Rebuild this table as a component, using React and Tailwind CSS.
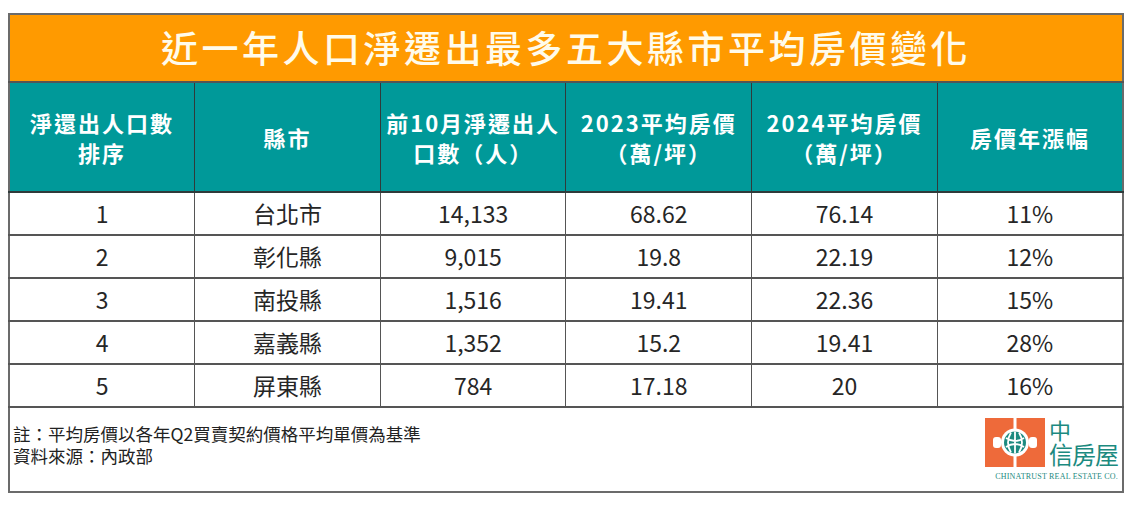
const rows = [
  ['1', '台北市', '14,133', '68.62', '76.14', '11%'],
  ['2', '彰化縣', '9,015', '19.8', '22.19', '12%'],
  ['3', '南投縣', '1,516', '19.41', '22.36', '15%'],
  ['4', '嘉義縣', '1,352', '15.2', '19.41', '28%'],
  ['5', '屏東縣', '784', '17.18', '20', '16%'],
]

const headers = [
  ['淨還出人口數', '排序'],
  ['縣市'],
  ['前10月淨遷出人', '口數（人）'],
  ['2023平均房價', '（萬/坪）'],
  ['2024平均房價', '（萬/坪）'],
  ['房價年漲幅'],
]

const Logo = () => (
  <div className="flex flex-col items-end">
    <div className="flex items-end gap-[4px]">
      <svg width="60" height="49" viewBox="0 0 60 49">
        <rect x="0" y="0" width="60" height="49" fill="#ee6a3a" />
        <rect x="28.5" y="0" width="3" height="14" fill="#fff" />
        <rect x="28.5" y="35" width="3" height="14" fill="#fff" />
        <circle cx="30" cy="24.5" r="14" fill="#fff" />
        <rect x="8" y="19" width="8" height="11" rx="3" fill="#fff" />
        <rect x="44" y="19" width="8" height="11" rx="3" fill="#fff" />
        <circle cx="30" cy="24.5" r="11" fill="#1c8a80" />
        <path d="M21 20 Q30 26 39 20 M21 29 Q30 23 39 29 M26 14.5 Q20 24.5 26 34.5 M34 14.5 Q40 24.5 34 34.5 M30 13.5 L30 35.5" stroke="#fff" strokeWidth="1.8" fill="none" />
      </svg>
      <div className="flex flex-col text-[#1c8a80]">
        <span className="text-[22px] leading-[24px]">中</span>
        <span className="text-[24px] leading-[26px] tracking-[-1px]">信房屋</span>
      </div>
    </div>
    <div className="mt-[6px] text-[8px] leading-none tracking-[0.2px] text-[#1c8a80] whitespace-nowrap" style={{ fontFamily: '"Liberation Serif", serif' }}>
      CHINATRUST REAL ESTATE CO.
    </div>
  </div>
)

export default function App() {
  return (
    <div className="w-[1136px] h-[505px] bg-white pt-[13px] pl-[8px]" style={{ fontFamily: '"Noto Sans CJK TC", sans-serif' }}>
      <table className="w-[1116px] table-fixed border-collapse border-2 border-[#6b6b6b]">
        <tbody>
          <tr>
            <td colSpan={6} className="h-[68px] bg-[#ff9a00] text-center text-[37px] font-medium tracking-[3.5px] text-[#fffbeb] border-b-2 border-[#555]">
              近一年人口淨遷出最多五大縣市平均房價變化
            </td>
          </tr>
          <tr>
            {headers.map((h, i) => (
              <td key={i} className="h-[110px] bg-[#009999] text-center text-white text-[22px] font-bold leading-[30px] tracking-[2px] border-r border-b-2 border-[#2f3a3a]">
                {h.map((line, j) => (
                  <div key={j}>{line}</div>
                ))}
              </td>
            ))}
          </tr>
          {rows.map((r, i) => (
            <tr key={i}>
              {r.map((c, j) => (
                <td key={j} className="h-[43px] text-center text-[23px] text-[#262626] border-r border-b-2 border-[#555] leading-none">
                  {c}
                </td>
              ))}
            </tr>
          ))}
          <tr>
            <td colSpan={6} className="h-[85px] align-top">
              <div className="flex justify-between pl-[3px] pr-[4px]">
                <div className="pt-[15px] text-[17.5px] leading-[22px] text-[#222]">
                  <div>註：平均房價以各年Q2買賣契約價格平均單價為基準</div>
                  <div>資料來源：內政部</div>
                </div>
                <div className="pt-[9px]">
                  <Logo />
                </div>
              </div>
            </td>
          </tr>
        </tbody>
      </table>
    </div>
  )
}
